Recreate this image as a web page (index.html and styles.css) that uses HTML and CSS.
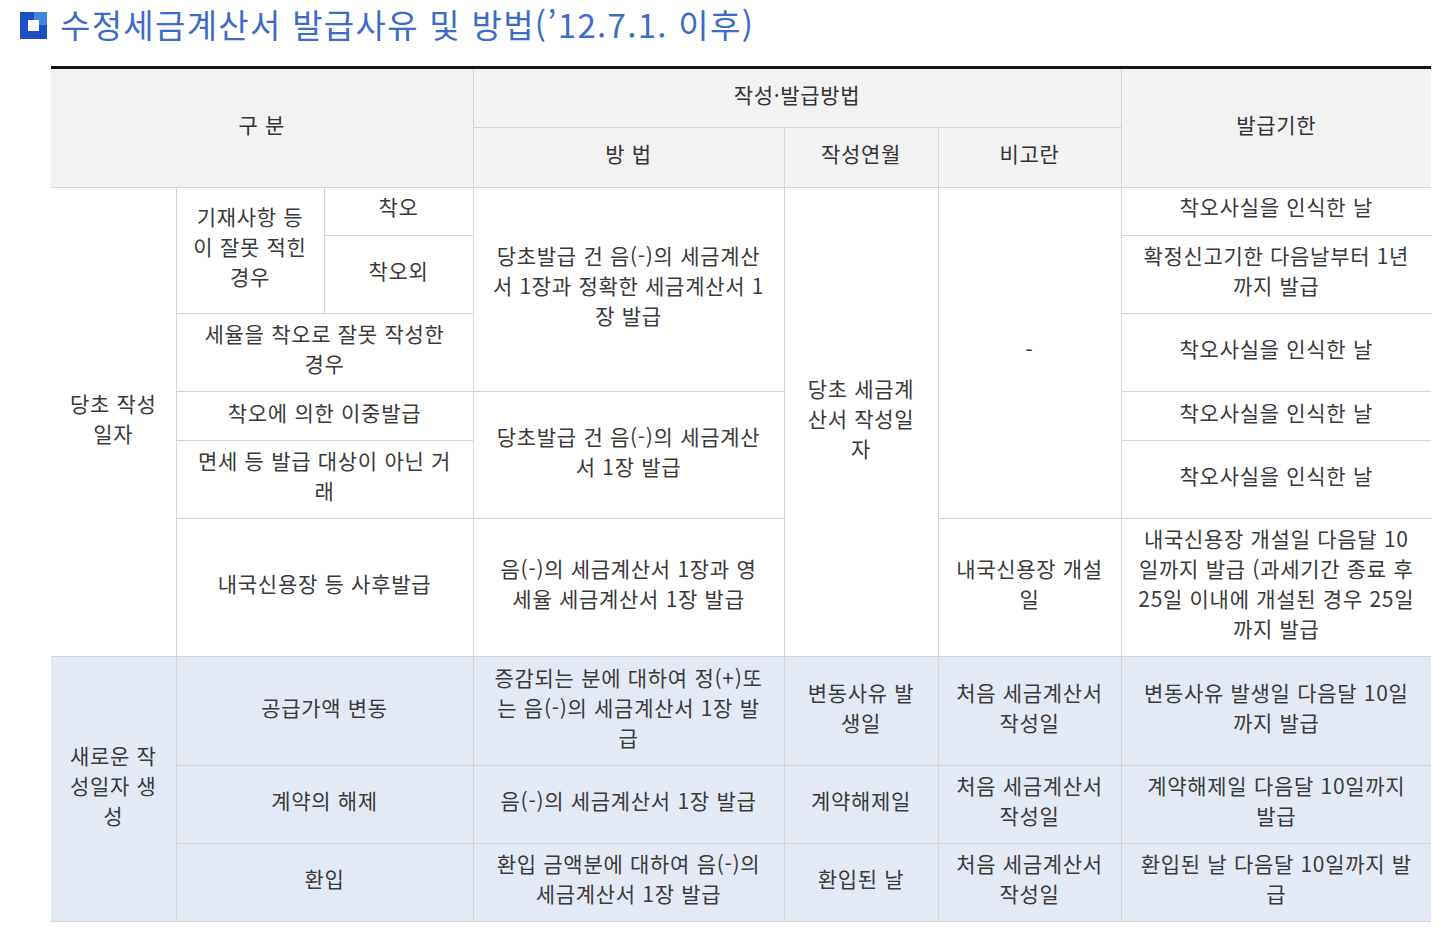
FILE: index.html
```html
<!DOCTYPE html>
<html lang="ko">
<head>
<meta charset="utf-8">
<title>수정세금계산서 발급사유 및 방법</title>
<link rel="stylesheet" href="styles.css">
</head>
<body>
<div class="page">
  <h2 class="title">
    <svg class="title-icon" width="27" height="27" viewBox="0 0 27 27" aria-hidden="true">
      <rect x="0" y="0" width="27" height="27" fill="#1f4fc4"/>
      <rect x="14" y="0" width="13" height="13" fill="#3f86e0"/>
      <rect x="8" y="8" width="11" height="11" fill="#ffffff"/>
    </svg>
    <span>수정세금계산서 발급사유 및 방법(’12.7.1. 이후)</span>
  </h2>

  <table class="tax">
    <colgroup>
      <col class="c1"><col class="c2"><col class="c3"><col class="c4"><col class="c5"><col class="c6"><col class="c7">
    </colgroup>
    <thead>
      <tr class="hr1">
        <th colspan="3" rowspan="2">구 분</th>
        <th colspan="3">작성·발급방법</th>
        <th rowspan="2">발급기한</th>
      </tr>
      <tr class="hr2">
        <th>방 법</th>
        <th>작성연월</th>
        <th>비고란</th>
      </tr>
    </thead>
    <tbody>
      <tr class="r1">
        <td rowspan="6">당초 작성<br>일자</td>
        <td rowspan="2">기재사항 등<br>이 잘못 적힌<br>경우</td>
        <td class="top">착오</td>
        <td rowspan="3">당초발급 건 음(-)의 세금계산<br>서 1장과 정확한 세금계산서 1<br>장 발급</td>
        <td rowspan="6">당초 세금계<br>산서 작성일<br>자</td>
        <td rowspan="5">-</td>
        <td class="top">착오사실을 인식한 날</td>
      </tr>
      <tr class="r2">
        <td>착오외</td>
        <td>확정신고기한 다음날부터 1년<br>까지 발급</td>
      </tr>
      <tr class="r3">
        <td colspan="2">세율을 착오로 잘못 작성한<br>경우</td>
        <td>착오사실을 인식한 날</td>
      </tr>
      <tr class="r4">
        <td colspan="2">착오에 의한 이중발급</td>
        <td rowspan="2">당초발급 건 음(-)의 세금계산<br>서 1장 발급</td>
        <td>착오사실을 인식한 날</td>
      </tr>
      <tr class="r5">
        <td colspan="2">면세 등 발급 대상이 아닌 거<br>래</td>
        <td>착오사실을 인식한 날</td>
      </tr>
      <tr class="r6">
        <td colspan="2">내국신용장 등 사후발급</td>
        <td>음(-)의 세금계산서 1장과 영<br>세율 세금계산서 1장 발급</td>
        <td>내국신용장 개설<br>일</td>
        <td>내국신용장 개설일 다음달 10<br>일까지 발급 (과세기간 종료 후<br>25일 이내에 개설된 경우 25일<br>까지 발급</td>
      </tr>
      <tr class="r7 blue">
        <td rowspan="3">새로운 작<br>성일자 생<br>성</td>
        <td colspan="2">공급가액 변동</td>
        <td>증감되는 분에 대하여 정(+)또<br>는 음(-)의 세금계산서 1장 발<br>급</td>
        <td>변동사유 발<br>생일</td>
        <td>처음 세금계산서<br>작성일</td>
        <td>변동사유 발생일 다음달 10일<br>까지 발급</td>
      </tr>
      <tr class="r8 blue">
        <td colspan="2">계약의 해제</td>
        <td>음(-)의 세금계산서 1장 발급</td>
        <td>계약해제일</td>
        <td>처음 세금계산서<br>작성일</td>
        <td>계약해제일 다음달 10일까지<br>발급</td>
      </tr>
      <tr class="r9 blue">
        <td colspan="2">환입</td>
        <td>환입 금액분에 대하여 음(-)의<br>세금계산서 1장 발급</td>
        <td>환입된 날</td>
        <td>처음 세금계산서<br>작성일</td>
        <td>환입된 날 다음달 10일까지 발<br>급</td>
      </tr>
    </tbody>
  </table>
</div>
</body>
</html>
```

FILE: styles.css
```css
html, body {
  margin: 0;
  padding: 0;
  background: #ffffff;
}

body {
  font-family: "Noto Sans CJK KR", "Noto Sans", sans-serif;
  color: #3a3a3a;
}

.page {
  padding: 0 0 20px 0;
}

.title {
  display: flex;
  align-items: flex-start;
  gap: 13px;
  margin: 0 0 19px 0;
  padding: 1px 0 0 20px;
  height: 46px;
  font-size: 33px;
  line-height: 46px;
  font-weight: 400;
  color: #3d6cc6;
  letter-spacing: 1.3px;
}

.title-icon {
  flex: none;
  display: block;
  margin-top: 11px;
}

.tax {
  margin-left: 51px;
  width: 1380px;
  table-layout: fixed;
  border-collapse: collapse;
  border-top: 3px solid #151515;
  border-left: hidden;
  border-right: hidden;
}

.c1 { width: 125px; }
.c2 { width: 148px; }
.c3 { width: 149px; }
.c4 { width: 311px; }
.c5 { width: 154px; }
.c6 { width: 183px; }
.c7 { width: 310px; }

.tax th,
.tax td {
  border: 1px solid #d4d4d4;
  text-align: center;
  vertical-align: middle;
  font-size: 21px;
  line-height: 30px;
  letter-spacing: 0.7px;
  font-weight: 400;
  padding: 0 0 9px;
  white-space: nowrap;
  color: #3a3a3a;
}

.tax th {
  background: #f2f2f2;
  color: #333333;
}

.tax td.top {
  padding-bottom: 11px;
}

.blue td {
  background: #e4eaf5;
}

.hr1 { height: 60px; }
.hr2 { height: 60px; }
.r1 { height: 48px; }
.r2 { height: 78px; }
.r3 { height: 78px; }
.r4 { height: 49px; }
.r5 { height: 78px; }
.r6 { height: 138px; }
.r7 { height: 109px; }
.r8 { height: 78px; }
.r9 { height: 78px; }
```
